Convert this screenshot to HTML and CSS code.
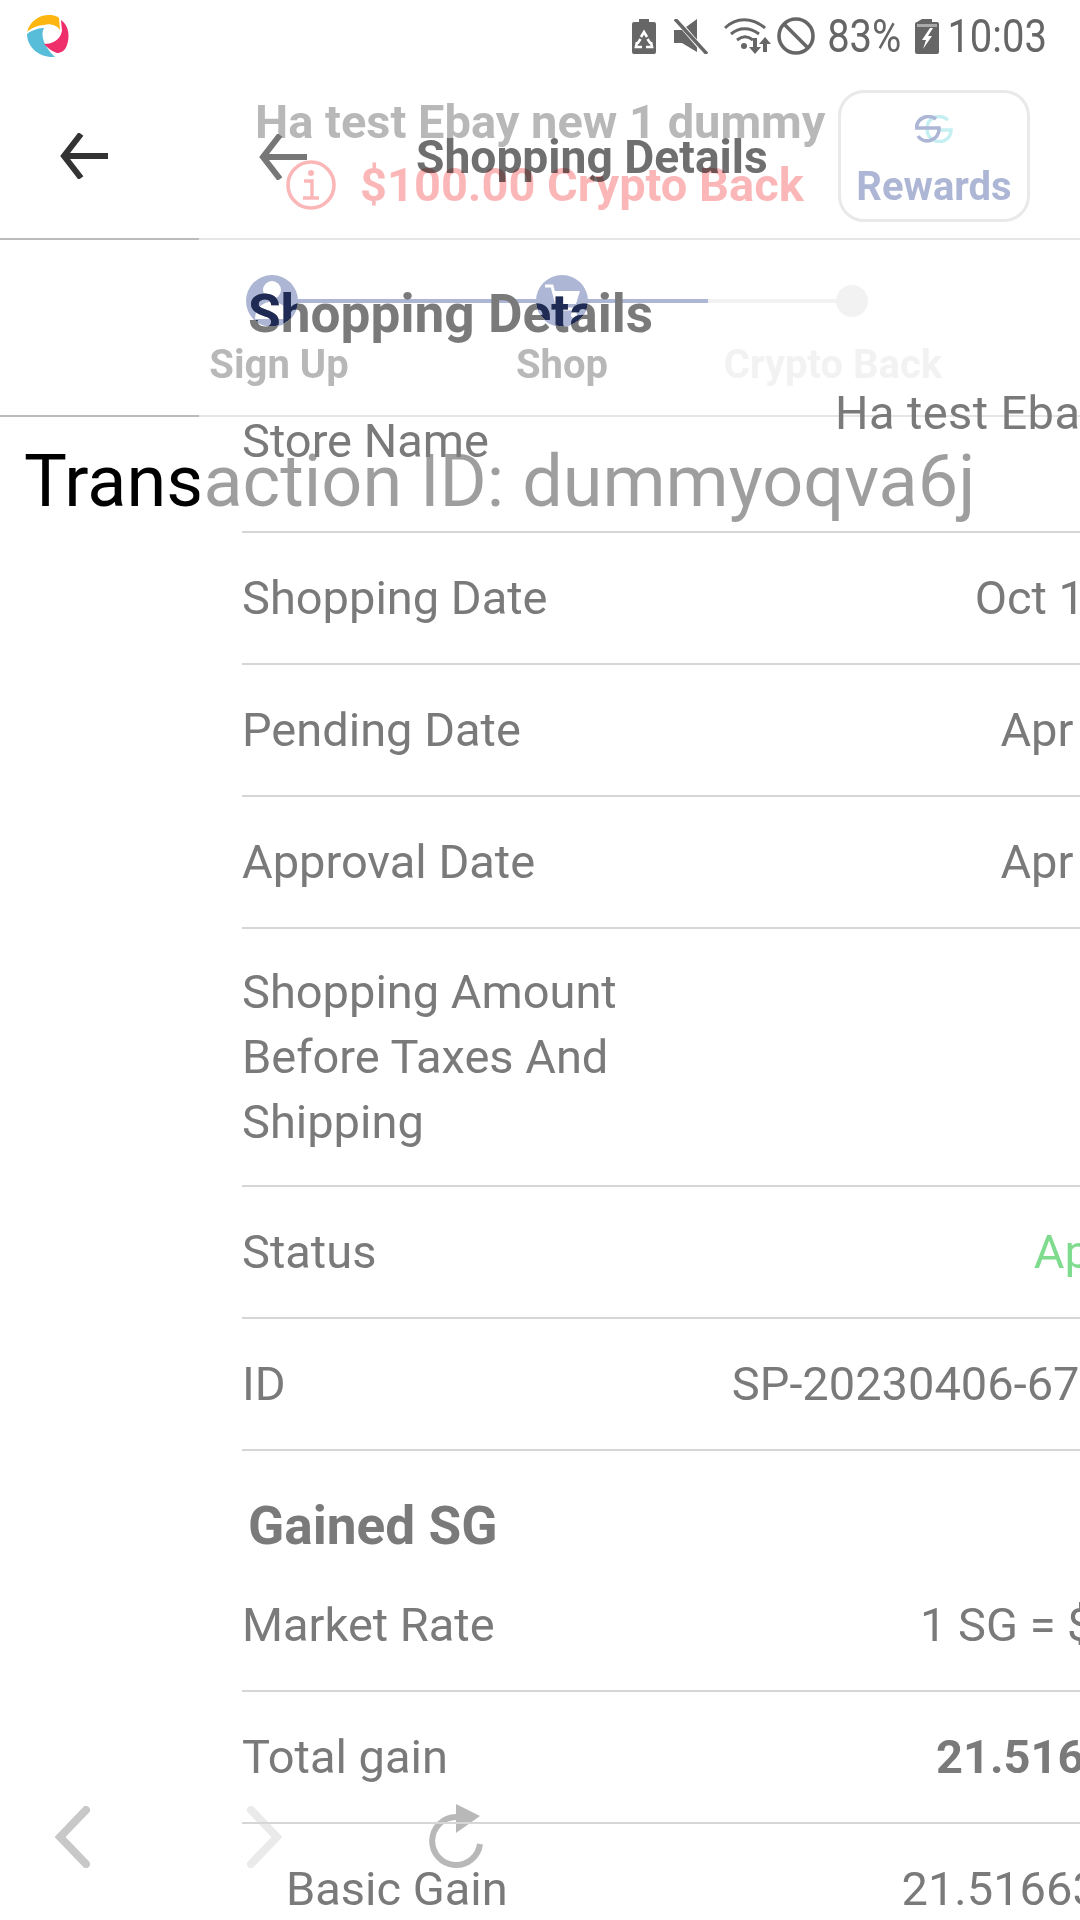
FILE: index.html
```html
<!DOCTYPE html>
<html lang="en">
<head>
<meta charset="utf-8">
<title>Shopping Details</title>
<link rel="stylesheet" href="styles.css">
</head>
<body>
<div class="screen">
  <header class="status">
    <svg class="logo" viewBox="0 0 43 43"><path fill="#fdb50f" d="M0 17C3 6 12 0 22 0c6 0 9 2 10 3l1 12c-3-5-11-7-16-5C10 10 3 14 0 17z"/><path fill="#58bdd8" d="M0 19c6-5 14-6 17-6-4 7 0 19 11 29C12 43 0 32 0 19z"/><path fill="#ee2f6b" d="M34 5c8 5 9 17 6 25-2 6-6 8-10 8-6-2-10-6-13-9 7 0 16-3 18-13z"/></svg>
    <div class="status-right">
      <svg class="ic-batt" viewBox="0 0 24 35"><path fill="#666" d="M7 0h10v3h5a2 2 0 0 1 2 2v28a2 2 0 0 1-2 2H2a2 2 0 0 1-2-2V5a2 2 0 0 1 2-2h5z"/><path fill="none" stroke="#fff" stroke-width="2.6" d="M9 18l3-5 3 5M5 23l-1 5h6M19 23l1 5h-6M8.500 20l-3 4.500M15.500 20l3 4.500"/></svg>
      <svg class="ic-mute" viewBox="0 0 34 35"><path fill="#666" d="M0 11h8L23 0v33L8 24H0z"/><path stroke="#fff" stroke-width="5" d="M2 0l30 35"/><path stroke="#666" stroke-width="3.500" d="M1 0l32 35"/></svg>
      <svg class="ic-wifi" viewBox="0 0 48 36"><g fill="none" stroke="#666" stroke-width="3"><path d="M1 10C12-1 28-1 41 10"/><path d="M7 16c8-7 19-7 28 0"/><path d="M13 22c5-4 11-4 16 0"/></g><circle cx="20" cy="28" r="3" fill="#666"/><path fill="#666" d="M29 20h4v9h4l-6 7-6-7h4zM41 19l6 7h-4v8h-4v-8h-4z"/></svg>
      <svg class="ic-block" viewBox="0 0 38 38"><circle cx="19" cy="19" r="17" fill="none" stroke="#666" stroke-width="3.600"/><path stroke="#666" stroke-width="3.600" d="M7 7l24 24"/></svg>
      <span class="pct">83%</span>
      <svg class="ic-charge" viewBox="0 0 24 35"><path fill="#666" d="M7 0h10v3h5a2 2 0 0 1 2 2v28a2 2 0 0 1-2 2H2a2 2 0 0 1-2-2V5a2 2 0 0 1 2-2z"/><rect x="2" y="5" width="20" height="3" fill="#aaa"/><path fill="#fff" d="M15 9l-8 12h4l-3 9 9-13h-4l5-8z"/></svg>
      <span class="time">10:03</span>
    </div>
  </header>

  <section class="back">
    <div class="back-head">
      <svg class="arrow arrow-dark" viewBox="0 0 48 46"><path fill="none" stroke="currentColor" stroke-width="6" d="M48 23H5M21 1L4 23l17 22"/></svg>
      <div class="offer">
        <div class="offer-name">Ha test Ebay new 1 dummy</div>
        <div class="offer-back">
          <svg class="info" viewBox="0 0 50 50"><circle cx="25" cy="25" r="23" fill="none" stroke="currentColor" stroke-width="3.600"/><circle cx="25" cy="13" r="3" fill="currentColor"/><path fill="none" stroke="currentColor" stroke-width="3.400" d="M18 21h8v17M17 38h16"/></svg>
          <span>$100.00 Crypto Back</span>
        </div>
      </div>
      <div class="rewards">
        <svg class="sg" viewBox="0 0 38 28"><path fill="none" stroke="#69d4dd" stroke-width="3.400" d="M33 5C25-2 12 2 12 14s14 16 21 9c2-2 3-5 3-8H24"/><path fill="none" stroke="#28418e" stroke-width="3.600" d="M21 4C14-1 2 2 1.500 13H24C25 26 8 30 3 21"/></svg>
        <span>Rewards</span>
      </div>
    </div>
    <div class="stepper">
      <div class="track"><div class="track-done"></div></div>
      <div class="step">
        <div class="dot"><svg viewBox="0 0 52 52"><circle cx="26" cy="15" r="9" fill="#fff"/><path fill="#fff" d="M9 44c0-23 34-23 34 0z"/></svg></div>
        <div class="step-label step-label-a">Sign Up</div>
      </div>
      <div class="step">
        <div class="dot"><svg viewBox="0 0 52 52"><path fill="none" stroke="#fff" stroke-width="3" d="M9 11h7l6 23h18"/><path fill="#fff" d="M18 16h26l-4 13H21z"/><circle cx="23" cy="40" r="3" fill="#fff"/><circle cx="38" cy="40" r="3" fill="#fff"/></svg></div>
        <div class="step-label">Shop</div>
      </div>
      <div class="step step-off">
        <div class="dot dot-off"></div>
        <div class="step-label">Crypto Back</div>
      </div>
    </div>
    <div class="txn">Transaction ID: dummyoqva6j</div>
    <nav class="toolbar">
      <svg class="chev" viewBox="0 0 36 62"><path fill="none" stroke="currentColor" stroke-width="8" stroke-linecap="round" d="M31 4L5 31l26 27"/></svg>
      <svg class="chev" viewBox="0 0 36 62"><path fill="none" stroke="currentColor" stroke-width="8" stroke-linecap="round" d="M5 4l26 27L5 58"/></svg>
      <svg class="reload" viewBox="0 0 54 66"><path fill="none" stroke="currentColor" stroke-width="6" d="M27 13A24 24 0 1 0 51 40"/><path fill="currentColor" d="M27 0l24 12-24 17z"/></svg>
    </nav>
  </section>

  <div class="veil"></div>

  <section class="front">
    <div class="front-head">
      <svg class="arrow arrow-soft" viewBox="0 0 48 46"><path fill="none" stroke="currentColor" stroke-width="6" d="M48 23H5M21 1L4 23l17 22"/></svg>
      <h1 class="front-title">Shopping Details</h1>
    </div>
    <h2 class="section section-first">Shopping Details</h2>
    <div class="rows">
      <div class="row row-store"><span>Store Name</span><span class="val val-wrap">Ha test Ebay new 1 dummy</span></div>
      <div class="row"><span>Shopping Date</span><span class="val">Oct 10, 2022</span></div>
      <div class="row"><span>Pending Date</span><span class="val">Apr 6, 2023</span></div>
      <div class="row"><span>Approval Date</span><span class="val">Apr 6, 2023</span></div>
      <div class="row row-tall"><span class="lbl-wrap">Shopping Amount Before Taxes And Shipping</span></div>
      <div class="row"><span>Status</span><span class="val val-ok">Approved</span></div>
      <div class="row"><span>ID</span><span class="val">SP-20230406-67890123</span></div>
    </div>
    <h2 class="section">Gained SG</h2>
    <div class="rows">
      <div class="row"><span>Market Rate</span><span class="val">1 SG = $0.1234</span></div>
      <div class="row"><span>Total gain</span><span class="val val-bold">21.516630 SG</span></div>
      <div class="row row-sub"><span>Basic Gain</span><span class="val">21.51663000SG</span></div>
    </div>
  </section>
</div>
</body>
</html>
```
FILE: styles.css
```css
* { box-sizing: border-box; }
html, body { margin: 0; padding: 0; background: #fff; }
body { font-family: Roboto, "Noto Sans", sans-serif; }
.screen { position: relative; width: 1080px; height: 1920px; overflow: hidden; background: #fff; }
svg { display: block; flex: none; }

/* status bar */
.status { height: 72px; display: flex; align-items: center; justify-content: space-between; padding: 0 33px 0 27px; color: #666; }
.logo { width: 43px; height: 43px; }
.status-right { display: flex; align-items: center; }
.ic-batt, .ic-charge { width: 24px; height: 35px; }
.ic-mute { width: 34px; height: 35px; margin-left: 18px; }
.ic-wifi { width: 48px; height: 36px; margin-left: 16px; }
.ic-block { width: 38px; height: 38px; margin-left: 5px; }
.pct, .time { display: inline-block; font-size: 40px; transform: scaleY(1.14); }
.pct { margin: 0 14px 0 12px; }
.time { margin-left: 8px; }

/* back page */
.back-head { height: 168px; display: flex; align-items: center; padding: 2px 50px 0 60px; border-bottom: 2px solid #bbb; }
.arrow { width: 48px; height: 46px; }
.arrow-dark { color: #333; }
.offer { margin: 0 0 6px 147px; width: 570px; }
.offer-name { font-size: 47px; font-weight: 700; color: #444; white-space: nowrap; line-height: 56px; }
.offer-back { display: flex; align-items: center; margin: 7px 0 0 31px; font-size: 47px; font-weight: 700; color: #f44346; line-height: 56px; white-space: nowrap; }
.info { width: 50px; height: 50px; margin-right: 24px; }
.rewards { width: 192px; height: 132px; margin-left: auto; border: 3px solid #c4c4c4; border-radius: 26px; display: flex; flex-direction: column; align-items: center; padding-top: 22px; color: #28418e; font-size: 40px; font-weight: 700; }
.sg { width: 38px; height: 28px; }
.rewards span { margin-top: 20px; }
.stepper { height: 177px; position: relative; display: flex; padding-left: 127px; border-bottom: 2px solid #bbb; }
.track { position: absolute; left: 272px; top: 59px; width: 580px; height: 4px; background: #dcdcdc; }
.track-done { width: 436px; height: 100%; background: #28418e; }
.step { position: relative; width: 290px; display: flex; flex-direction: column; align-items: center; }
.dot { width: 52px; height: 52px; border-radius: 50%; background: #28418e; margin-top: 35px; }
.dot-off { width: 32px; height: 32px; background: #dcdcdc; margin: 45px 0 10px; }
.step-label { font-size: 40px; font-weight: 700; color: #444; margin-top: 14px; white-space: nowrap; }
.step-label-a { margin-left: 14px; }
.step-off .step-label { color: #dcdcdc; margin-right: 38px; }
.txn { padding-left: 24px; font-size: 72px; color: #000; line-height: 88px; margin-top: 21px; white-space: nowrap; }
.toolbar { position: absolute; left: 55px; top: 1804px; display: flex; align-items: center; color: #c8c8c8; }
.chev { width: 36px; height: 62px; }
.chev + .chev { margin-left: 155px; }
.reload { width: 54px; height: 66px; margin-left: 147px; color: #444; }

/* overlay */
.veil { position: absolute; left: 199px; right: 0; top: 72px; bottom: 0; background: rgba(255, 255, 255, .62); }
.front { position: absolute; left: 199px; top: 72px; width: 1080px; color: #7a7a7a; }
.front-head { height: 167px; display: flex; align-items: center; padding: 2px 0 0 60px; }
.arrow-soft { color: #777; }
.front-title { margin: 0 0 0 109px; font-size: 46.200px; font-weight: 700; color: #6f6f6f; mix-blend-mode: multiply; white-space: nowrap; }
.section { margin: 0; padding: 44px 0 0 49px; font-size: 53.200px; font-weight: 700; height: 109px; line-height: 62px; color: #7a7a7a; white-space: nowrap; }
.section-first { height: 117px; background-clip: text; -webkit-background-clip: text; color: transparent; background-image: radial-gradient(circle 26px at 73px 61px, #1f2b55 99%, transparent 100%), radial-gradient(circle 26px at 363px 61px, #1f2b55 99%, transparent 100%), linear-gradient(#7a7a7a, #7a7a7a); }
.rows { margin-left: 43px; }
.row { display: flex; justify-content: space-between; align-items: center; min-height: 132px; padding: 0 41px 2px 0; border-bottom: 2px solid #d6d6d6; font-size: 47px; line-height: 65px; }
.val { white-space: nowrap; }
.val-wrap { white-space: normal; width: 420px; text-align: right; margin-right: -3px; letter-spacing: .4px; }
.row-store { padding-top: 24px; padding-bottom: 21px; }
.row-store span:first-child { padding-bottom: 10px; }
.lbl-wrap { width: 420px; }
.row-tall { min-height: 258px; }
.val-ok { color: #7fdc8f; padding-right: 5px; }
.val-bold { font-weight: 700; }
.row-sub { padding-left: 44px; }
```
